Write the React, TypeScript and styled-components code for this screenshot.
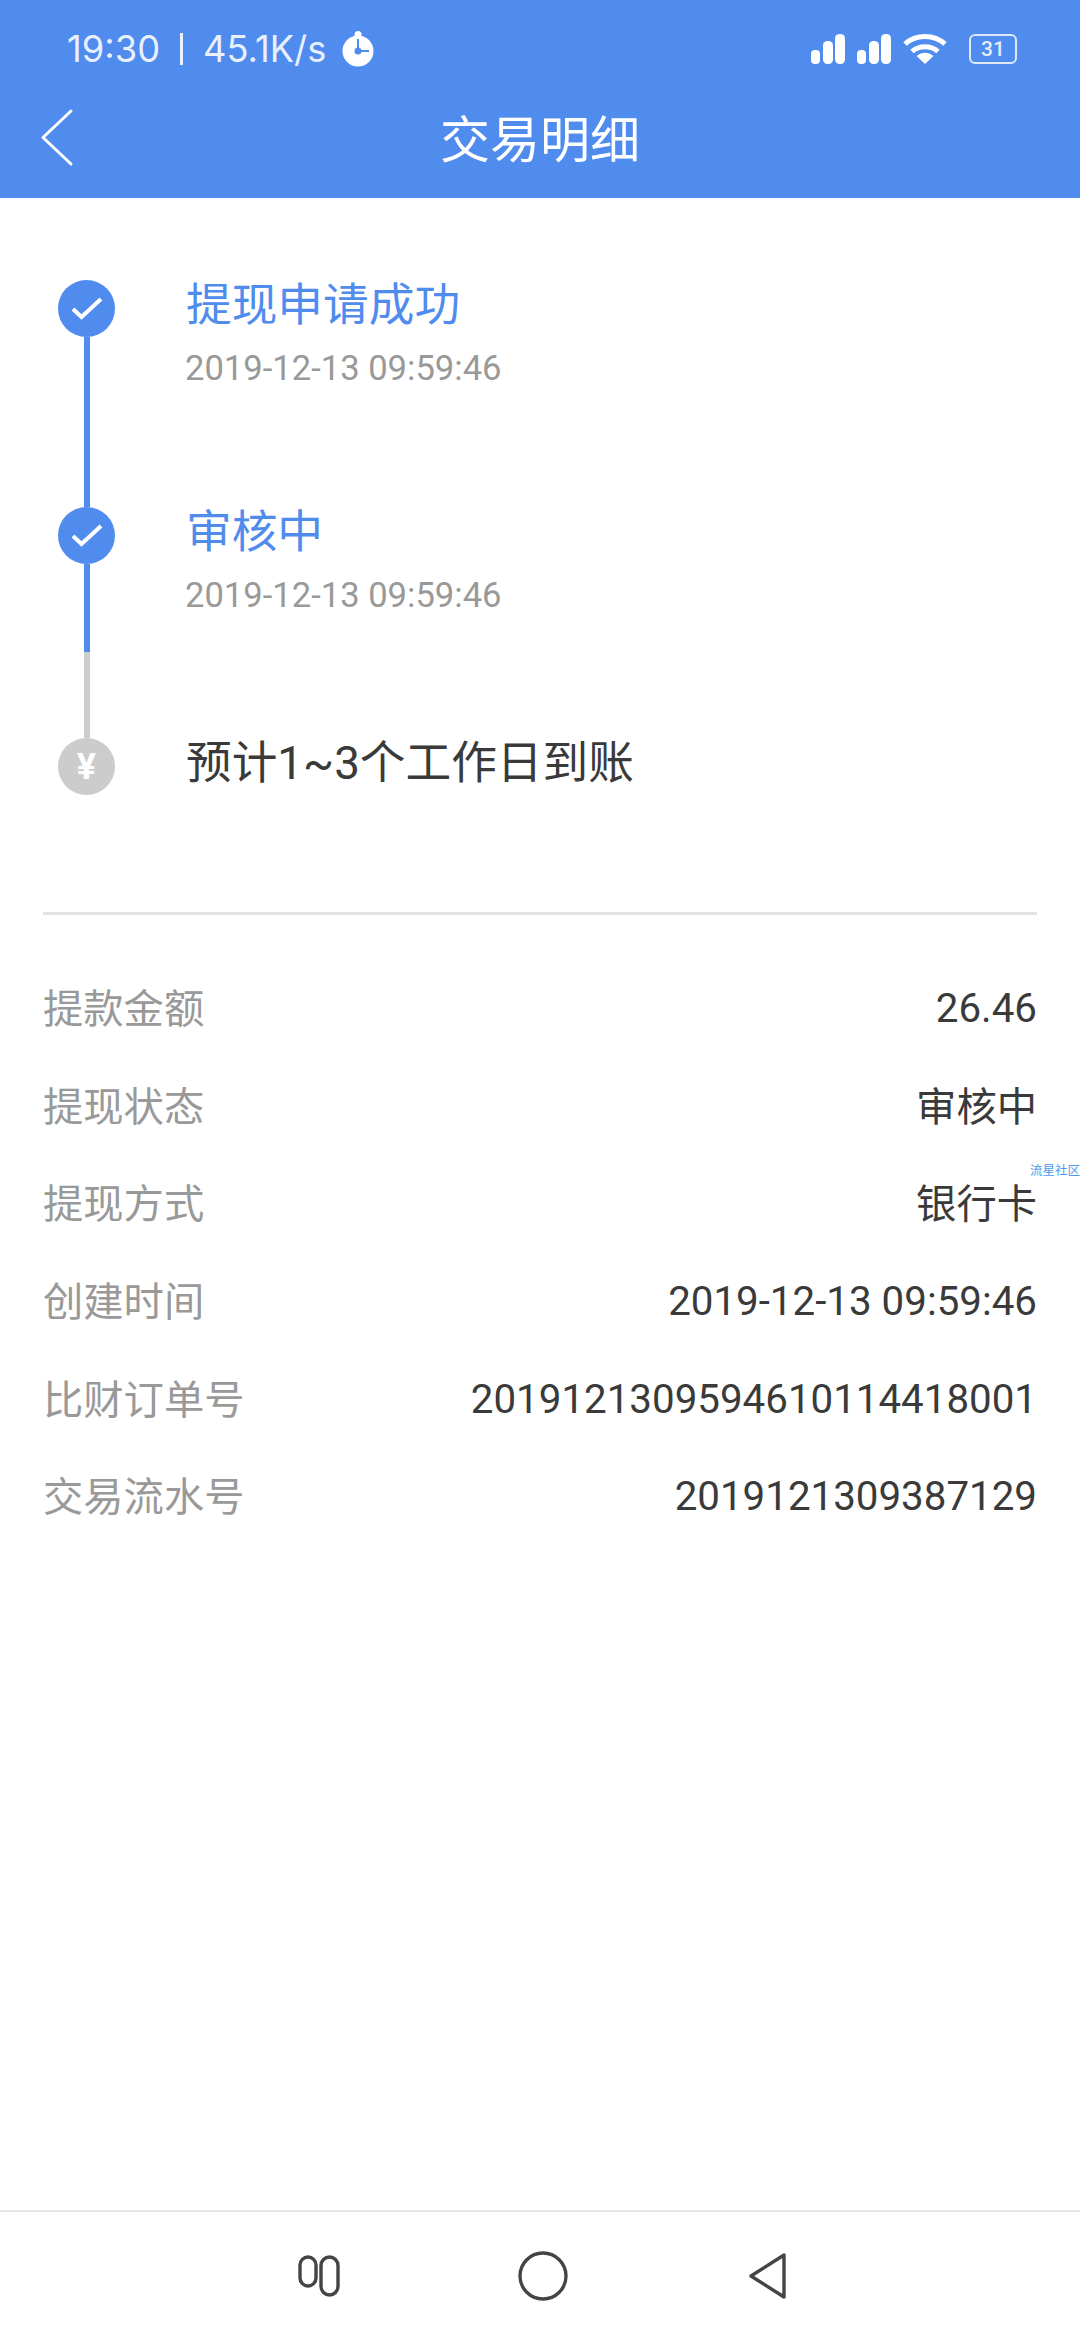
import React from "react";
import styled, { createGlobalStyle } from "styled-components";

const steps = [
    { title: "提现申请成功", time: "2019-12-13 09:59:46", done: true },
    { title: "审核中", time: "2019-12-13 09:59:46", done: true },
    { title: "预计1~3个工作日到账", done: false },
];

const details = [
    { label: "提款金额", value: "26.46" },
    { label: "提现状态", value: "审核中", cjk: true },
    { label: "提现方式", value: "银行卡", cjk: true },
    { label: "创建时间", value: "2019-12-13 09:59:46" },
    { label: "比财订单号", value: "2019121309594610114418001" },
    { label: "交易流水号", value: "2019121309387129" },
];

const App: React.FC = () => {
    return (
        <Page>
            <GlobalStyle />
            <Header>
                <StatusBar>
                    <StatusLeft>
                        <span>19:30</span>
                        <StatusDivider />
                        <span>45.1K/s</span>
                        <StopwatchIcon width="32" height="36" viewBox="0 0 32 36">
                            <circle cx="16" cy="20" r="15.5" fill="#fff" />
                            <circle cx="16" cy="3.5" r="3.5" fill="#fff" />
                            <path d="M16 8v12h11" stroke="#508cee" strokeWidth="2" fill="none" />
                            <circle cx="16" cy="20" r="3.5" fill="#508cee" />
                        </StopwatchIcon>
                    </StatusLeft>
                    <StatusRight>
                        <SignalIcon />
                        <SignalIcon />
                        <svg width="44" height="32" viewBox="0 0 44 32">
                            <path d="M2 11C13 1 31 1 42 11" stroke="#fff" strokeWidth="5" fill="none" />
                            <path d="M9 18.5C16 12 28 12 35 18.5" stroke="#fff" strokeWidth="5" fill="none" />
                            <path d="M13.5 23C18.5 18.5 25.5 18.5 30.5 23L22 31Z" fill="#fff" />
                        </svg>
                        <Battery>31</Battery>
                    </StatusRight>
                </StatusBar>
                <TitleBar>
                    <BackIcon viewBox="0 0 34 60" width="34" height="60">
                        <path d="M31 3L3 29.5L31 56" stroke="#fff" strokeWidth="3" fill="none" strokeLinecap="round" strokeLinejoin="round" />
                    </BackIcon>
                    <Title>交易明细</Title>
                </TitleBar>
            </Header>

            <Content>
                <Timeline>
                    {steps.map((step, i) => (
                        <Step key={step.title}>
                            <Rail>
                                <Dot $done={step.done}>
                                    {step.done ? (
                                        <svg width="32" height="26" viewBox="0 0 32 26">
                                            <path d="M2 13L10.5 21L30 3" stroke="#fff" strokeWidth="4" fill="none" />
                                        </svg>
                                    ) : (
                                        "¥"
                                    )}
                                </Dot>
                                {i === 0 && <Connector $height={170} $color="#508cee" />}
                                {i === 1 && (
                                    <>
                                        <Connector $height={88} $color="#508cee" />
                                        <Connector $height={86} $color="#cccccc" />
                                    </>
                                )}
                            </Rail>
                            <StepBody>
                                <StepTitle $done={step.done}>{step.title}</StepTitle>
                                {step.time && <StepTime>{step.time}</StepTime>}
                            </StepBody>
                        </Step>
                    ))}
                </Timeline>

                <Divider />

                <DetailList>
                    {details.map((row) => (
                        <DetailRow key={row.label}>
                            <DetailLabel>{row.label}</DetailLabel>
                            <DetailValue $cjk={row.cjk}>{row.value}</DetailValue>
                        </DetailRow>
                    ))}
                </DetailList>
                <Watermark>流星社区</Watermark>
            </Content>

            <NavBar>
                <svg width="42" height="42" viewBox="0 0 42 42">
                    <rect x="2" y="2" width="16" height="29" rx="8" stroke="#444" strokeWidth="3.4" fill="none" />
                    <rect x="23" y="2" width="17" height="38" rx="8.5" stroke="#444" strokeWidth="3.4" fill="none" />
                </svg>
                <svg width="50" height="50" viewBox="0 0 50 50">
                    <circle cx="25" cy="25" r="23" stroke="#444" strokeWidth="3.4" fill="none" />
                </svg>
                <svg width="41" height="48" viewBox="0 0 41 48">
                    <path d="M38 3V45L5 24Z" stroke="#444" strokeWidth="3.4" fill="none" strokeLinejoin="round" />
                </svg>
            </NavBar>
        </Page>
    );
};

const SignalIcon: React.FC = () => (
    <svg width="34" height="30" viewBox="0 0 34 30">
        <rect x="0" y="16" width="9" height="14" rx="4" fill="#fff" />
        <rect x="12" y="7" width="10" height="23" rx="4.5" fill="#fff" />
        <rect x="24" y="0" width="10" height="30" rx="4.5" fill="#fff" />
    </svg>
);

export default App;

// Styled Components
const GlobalStyle = createGlobalStyle`
    html, body {
        margin: 0;
        padding: 0;
        background: #fff;
    }
    body {
        font-family: Roboto, "Noto Sans CJK SC", sans-serif;
    }
`;

const Page = styled.div`
    width: 1080px;
    height: 2340px;
    display: flex;
    flex-direction: column;
    overflow: hidden;
    background: #fff;
`;

const Header = styled.header`
    height: 198px;
    flex-shrink: 0;
    background: #508cee;
    color: #fff;
    display: flex;
    flex-direction: column;
`;

const StatusBar = styled.div`
    height: 98px;
    padding: 0 63px 0 67px;
    display: flex;
    align-items: center;
    justify-content: space-between;
`;

const StatusLeft = styled.div`
    display: flex;
    align-items: center;
    gap: 14px;
    font-family: Inter, "Noto Sans CJK SC", sans-serif;
    font-size: 36.3px;
    color: rgba(255, 255, 255, 0.88);
`;

const StatusDivider = styled.i`
    width: 3px;
    height: 32px;
    margin: 0 6px;
    background: rgba(255, 255, 255, 0.88);
`;

const StopwatchIcon = styled.svg`
    margin-left: 2px;
`;

const StatusRight = styled.div`
    display: flex;
    align-items: center;
    gap: 12px;
`;

const Battery = styled.div`
    width: 48px;
    height: 30px;
    margin-left: 10px;
    box-sizing: border-box;
    border: 2.5px solid rgba(255, 255, 255, 0.8);
    border-radius: 6px;
    display: flex;
    align-items: center;
    justify-content: center;
    font-family: Roboto, sans-serif;
    font-size: 21px;
    font-weight: 500;
    color: rgba(255, 255, 255, 0.85);
`;

const TitleBar = styled.div`
    position: relative;
    flex: 1;
    padding-bottom: 24px;
    display: flex;
    align-items: center;
    justify-content: center;
`;

const BackIcon = styled.svg`
    position: absolute;
    left: 40px;
    top: 10px;
`;

const Title = styled.h1`
    margin: 0;
    font-family: "Noto Sans CJK SC", sans-serif;
    font-size: 50px;
    font-weight: 400;
    line-height: 1;
`;

const Content = styled.main`
    position: relative;
    flex: 1;
    padding: 82px 43px 0;
`;

const Timeline = styled.div`
    padding-left: 15px;
    display: flex;
    flex-direction: column;
`;

const Step = styled.div`
    display: flex;
    gap: 71px;
`;

const Rail = styled.div`
    width: 57px;
    display: flex;
    flex-direction: column;
    align-items: center;
    flex-shrink: 0;
`;

const Dot = styled.div<{ $done: boolean }>`
    width: 57px;
    height: 57px;
    border-radius: 50%;
    background: ${({ $done }) => ($done ? "#508cee" : "#cccccc")};
    color: #fff;
    display: flex;
    align-items: center;
    justify-content: center;
    font-size: 36px;
    font-weight: 700;
    line-height: 1;
`;

const Connector = styled.div<{ $height: number; $color: string }>`
    width: 6px;
    height: ${({ $height }) => $height}px;
    background: ${({ $color }) => $color};
`;

const StepBody = styled.div`
    display: flex;
    flex-direction: column;
    gap: 12px;
    margin-top: -4px;
`;

const StepTitle = styled.div<{ $done: boolean }>`
    font-family: Roboto, "Noto Sans CJK SC", sans-serif;
    font-size: 45.7px;
    line-height: 60px;
    color: ${({ $done }) => ($done ? "#508cee" : "#3a3a3a")};
`;

const StepTime = styled.div`
    margin-left: -1px;
    font-family: Roboto, sans-serif;
    font-size: 34.6px;
    line-height: 40px;
    color: #999999;
`;

const Divider = styled.div`
    height: 3px;
    margin-top: 117px;
    background: #e3e3e3;
`;

const DetailList = styled.div`
    margin-top: 45px;
    display: flex;
    flex-direction: column;
`;

const DetailRow = styled.div`
    height: 97.6px;
    display: flex;
    align-items: center;
    justify-content: space-between;
    font-size: 40.3px;
`;

const DetailLabel = styled.span`
    padding-bottom: 6px;
    font-family: "Noto Sans CJK SC", sans-serif;
    color: #999999;
`;

const DetailValue = styled.span<{ $cjk?: boolean }>`
    padding-bottom: ${({ $cjk }) => ($cjk ? "6px" : "0")};
    font-family: Roboto, "Noto Sans CJK SC", sans-serif;
    color: #3a3a3a;
`;

const Watermark = styled.span`
    position: absolute;
    right: 0;
    top: 966px;
    font-family: "Noto Sans CJK SC", sans-serif;
    font-size: 12.5px;
    line-height: 1;
    color: #4a9bf0;
`;

const NavBar = styled.nav`
    height: 130px;
    flex-shrink: 0;
    box-sizing: border-box;
    border-top: 2px solid #e6e6e6;
    padding-left: 298px;
    display: flex;
    align-items: center;
    gap: 178px;
`;
